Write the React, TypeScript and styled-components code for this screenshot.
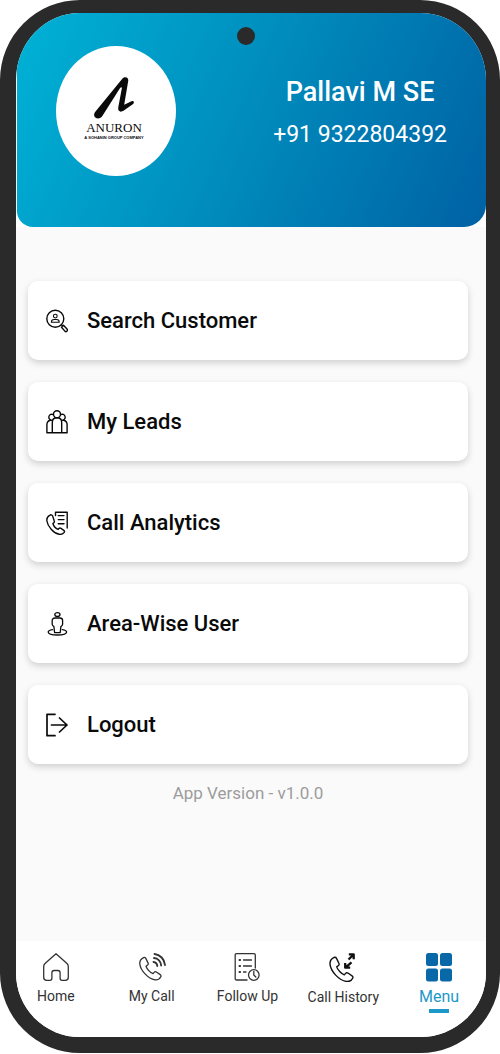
import React from "react";
import styled, { createGlobalStyle } from "styled-components";

const GlobalStyle = createGlobalStyle`
  *, *::before, *::after { box-sizing: border-box; }
  body {
    margin: 0;
    background: #ffffff;
    font-family: Roboto, "Liberation Sans", sans-serif;
  }
`;

const Phone = styled.div`
  position: relative;
  display: flex;
  flex-direction: column;
  min-height: calc(100vh - 1px);
  border: solid #2a2a2a;
  border-width: 13px 14px 16px 16px;
  border-radius: 80px;
  background: #ffffff;
  overflow: hidden;
`;

const Camera = styled.span`
  position: absolute;
  top: 14px;
  left: 49%;
  width: 18px;
  height: 18px;
  transform: translateX(-50%);
  border-radius: 50%;
  background: #2a2a2a;
`;

const Header = styled.header`
  display: flex;
  align-items: flex-start;
  justify-content: space-between;
  min-height: 214px;
  margin-left: 1px;
  padding: 33px 39px 0;
  border-radius: 0 0 22px 16px;
  background: linear-gradient(114deg, #00b2d6 0%, #008dbd 48%, #0061a4 100%);
`;

const Avatar = styled.div`
  display: flex;
  flex-direction: column;
  align-items: center;
  width: 120px;
  height: 130px;
  padding: 30px 4px 0 0;
  border-radius: 50%;
  background: #ffffff;
  color: #0a0a0a;
`;

const BrandName = styled.span`
  font: 13px/14px "Liberation Serif", serif;
`;

const BrandLine = styled.span`
  font: bold 4px/6px "Liberation Sans", sans-serif;
  white-space: nowrap;
`;

const Profile = styled.div`
  padding-top: 28px;
  color: #ffffff;
  text-align: center;
`;

const Name = styled.h1`
  margin: 0;
  font-size: 27px;
  font-weight: 500;
  line-height: 36px;
`;

const PhoneNumber = styled.p`
  margin: 8px 0 0;
  font-size: 23px;
  font-weight: 400;
  line-height: 34px;
`;

const Content = styled.main`
  flex: 1;
  padding: 54px 18px 24px 12px;
  background: #fafafa;
`;

const MenuList = styled.ul`
  display: grid;
  gap: 22px;
  margin: 0;
  padding: 0;
  list-style: none;
`;

const MenuCard = styled.button`
  display: flex;
  align-items: center;
  gap: 19px;
  width: 100%;
  height: 79px;
  padding: 0 18px;
  border: 0;
  border-radius: 10px;
  background: #ffffff;
  box-shadow: 0 3px 7px rgba(0, 0, 0, 0.17);
  color: #0a0a0a;
  font-family: inherit;
  font-size: 22px;
  font-weight: 500;
  line-height: 30px;
  text-align: left;
  cursor: pointer;
`;

const Version = styled.p`
  margin: 15px 0 0;
  color: #9c9c9c;
  font-size: 17px;
  line-height: 28px;
  text-align: center;
`;

const TabBar = styled.nav`
  display: grid;
  grid-template-columns: repeat(5, minmax(0, 1fr));
  gap: 16px;
  min-height: 96px;
  padding: 12px 7px 0 0;
  background: #ffffff;
`;

const Tab = styled.a<{ $active?: boolean }>`
  display: flex;
  flex-direction: column;
  align-items: center;
  color: ${(p) => (p.$active ? "#1c98c9" : "#333333")};
  font-size: ${(p) => (p.$active ? "16px" : "14px")};
  line-height: 30px;
  text-decoration: none;
  white-space: nowrap;

  &::after {
    content: "";
    width: 20px;
    height: 4px;
    margin-top: -3px;
    background: ${(p) => (p.$active ? "#1c98c9" : "transparent")};
  }
`;

const Svg = styled.svg`
  display: block;
  flex: none;
  fill: none;
  stroke: currentColor;
  stroke-linecap: round;
  stroke-linejoin: round;
`;

const CardSvg = styled(Svg).attrs({
  width: 22,
  height: 24,
  viewBox: "1 0 22 24",
})``;

const handset =
  "M6.6 3.6C4.6 4.6 2.4 6.4 2.8 10c.7 6.400 8.200 14.800 15.200 15.800 2.800.4 4.800-1 5.800-3 .4-.8.2-1.600-.6-2.200l-3.800-2.600c-.8-.5-1.600-.4-2.200.3l-1.200 1.400c-2.800-1-6.200-4.800-7-7.400l1.600-1.300c.7-.6.8-1.300.4-2.100L8.800 4.400c-.5-.9-1.300-1.200-2.200-.8z";

const BrandMark = () => (
  <Svg width="44" height="45" viewBox="0 0 44 45" aria-hidden="true">
    <path
      d="M3.500 35.500 30.500 2.500C32.500.2 36.500.8 36.300 4.500L32.200 28.800l7.300-3.600c2.300-.8 3.300 1.400 1.600 2.800L31.500 34.800c-3 1.800-5.700.6-5.300-3L29.800 12.500c.2-1.500-.8-1.700-1.700-.4L10.500 39.800c-1.800 3-5.200 3.500-7.200 1.700-1.800-1.700-1.500-4 .2-6z"
      fill="currentColor"
      stroke="none"
    />
  </Svg>
);

const SearchUserIcon = () => (
  <CardSvg strokeWidth="1.400">
    <circle cx="10.300" cy="9.800" r="8.500" />
    <path d="m16.400 15.700 1.400 1.400M16.500 18.200l2-2 3.700 4.100c.8 1.200-1 3-2.100 2.100z" />
    <circle cx="10.300" cy="7.100" r="1.900" strokeWidth="1.100" />
    <path d="M6.400 13.200c0-2 1.300-2.700 2.700-2.700h2.400c1.400 0 2.700.7 2.700 2.700z" strokeWidth="1.100" />
  </CardSvg>
);

const PeopleIcon = () => (
  <CardSvg strokeWidth="1.400">
    <circle cx="12" cy="4.300" r="3.500" />
    <path d="M8.300 4.600a3 3 0 1 0-1.700 5.600M15.700 4.600a3 3 0 1 1 1.700 5.600" />
    <path d="M7.300 22.800V12.500c0-3 1.800-4.700 4.700-4.700s4.700 1.700 4.700 4.700v10.300M5.500 10.300c-2.400.4-3.600 2-3.600 4.500v8h20.200v-8c0-2.500-1.200-4.100-3.600-4.500" />
  </CardSvg>
);

const CallReportIcon = () => (
  <CardSvg strokeWidth="1.400">
    <path d="M10.500 4.500V1.300h11.700v15.700M13.200 4.600h5.800M13.200 8.600h5.800M13.200 12.700h5.800" />
    <path d="M4.600 4.300C2.600 5.400 1.500 7.300 1.900 10c.7 5.600 7.100 12.500 12.300 13.300 2.200.3 4-.6 5-2 .5-.8.3-1.500-.4-2l-2.800-1.900c-.8-.5-1.500-.4-2.100.2l-.8.8c-2.200-1-4.600-3.600-5.200-5.900l.9-.8c.7-.6.8-1.200.4-2L7.600 4.900c-.6-1.200-1.800-1.400-3-.6z" />
  </CardSvg>
);

const AreaUserIcon = () => (
  <CardSvg strokeWidth="1.300">
    <ellipse cx="12.400" cy="2.600" rx="2.600" ry="1.900" />
    <path d="M9.900 6h5c1.600 0 2.700 1 2.700 2.500v3.800c0 1.200-1 1.700-1.700 2.300l-.7 6H9.600l-.7-6c-.7-.6-1.700-1.100-1.700-2.300V8.500C7.200 7 8.300 6 9.900 6z" />
    <path d="M7.500 17.600c-2.600.4-4.300 1.200-4.300 2.400 0 1.800 4.200 3 9.200 3s9.200-1.200 9.200-3c0-1.200-1.700-2-4.300-2.400" />
  </CardSvg>
);

const LogoutIcon = () => (
  <CardSvg strokeWidth="1.700">
    <path d="M10 1.300H2v21.400h8M6.500 12h15.500M14.500 5l7.500 7-7.500 7" />
  </CardSvg>
);

const HomeIcon = () => (
  <Svg width="28" height="28" viewBox="0 0 28 28" strokeWidth="1.300">
    <path d="M14 .8 3 10.500c-.9.900-1.300 1.700-1.300 3v10.700c0 2.200 1 3.100 3 3.100h3.200c1.500 0 2-.6 2-2v-5.500c0-1.600.6-2.300 2.200-2.300h3.800c1.600 0 2.200.7 2.200 2.300v5.500c0 1.400.5 2 2 2h3.200c2 0 3-.9 3-3.100V13.500c0-1.300-.4-2.100-1.300-3z" />
  </Svg>
);

const CallIcon = () => (
  <Svg width="28" height="28" viewBox="0 0 28 28" strokeWidth="1.300">
    <path d={handset} transform="translate(-1 1)" />
    <path
      d="M16.500 1c5.600.5 10 5.200 10.500 11M16 5c4 .3 6.800 3.600 7.200 7.500M15.500 9c2 .2 3.600 1.900 3.800 4"
      strokeWidth="1.900"
    />
  </Svg>
);

const FollowUpIcon = () => (
  <Svg width="28" height="28" viewBox="0 0 28 28" strokeWidth="1.300">
    <path d="M14 27H3.500c-.8 0-1.300-.5-1.300-1.300V2c0-.8.500-1.300 1.300-1.300H21c.8 0 1.300.5 1.300 1.300v13M10.500 7h8M10.500 13h8M10.500 19H13" />
    <path d="M6.500 7h.6M6.500 13h.6M6.500 19h.6" strokeWidth="2" />
    <circle cx="20.800" cy="22" r="5.300" />
    <path d="M20.800 18.500V22l2 2" />
  </Svg>
);

const CallHistoryIcon = () => (
  <Svg width="28" height="29" viewBox="0 0 28 29" strokeWidth="1.300" color="#111111">
    <path d={handset} transform="translate(-2 .6) scale(1.080)" />
    <path
      d="m19.500 6.500 4.800-4.800M19.800 1.400h4.900v4.800M22.500 9.300l-5.800 5M16.200 9.900v4.800h5"
      strokeWidth="2.300"
      strokeLinecap="butt"
    />
  </Svg>
);

const GridIcon = () => (
  <Svg width="28" height="29" viewBox="0 0 28 29">
    <g fill="#0868a8" stroke="none">
      <rect x="1" y="0" width="12" height="13" rx="2.500" />
      <rect x="15" y="0" width="12" height="13" rx="2.500" />
      <rect x="1" y="15.500" width="12" height="13" rx="2.500" />
      <rect x="15" y="15.500" width="12" height="13" rx="2.500" />
    </g>
  </Svg>
);

const menuItems = [
  { label: "Search Customer", Icon: SearchUserIcon },
  { label: "My Leads", Icon: PeopleIcon },
  { label: "Call Analytics", Icon: CallReportIcon },
  { label: "Area-Wise User", Icon: AreaUserIcon },
  { label: "Logout", Icon: LogoutIcon },
];

const tabs = [
  { label: "Home", href: "#home", Icon: HomeIcon },
  { label: "My Call", href: "#my-call", Icon: CallIcon },
  { label: "Follow Up", href: "#follow-up", Icon: FollowUpIcon },
  { label: "Call History", href: "#call-history", Icon: CallHistoryIcon },
  { label: "Menu", href: "#menu", Icon: GridIcon, active: true },
];

export default function App() {
  return (
    <>
      <GlobalStyle />
      <Phone>
        <Header>
          <Avatar>
            <BrandMark />
            <BrandName>ANURON</BrandName>
            <BrandLine>A SOHANIN GROUP COMPANY</BrandLine>
          </Avatar>
          <Profile>
            <Name>Pallavi M SE</Name>
            <PhoneNumber>+91 9322804392</PhoneNumber>
          </Profile>
        </Header>
        <Camera />
        <Content>
          <MenuList>
            {menuItems.map(({ label, Icon }) => (
              <li key={label}>
                <MenuCard type="button">
                  <Icon />
                  {label}
                </MenuCard>
              </li>
            ))}
          </MenuList>
          <Version>App Version - v1.0.0</Version>
        </Content>
        <TabBar>
          {tabs.map(({ label, href, Icon, active }) => (
            <Tab key={label} href={href} $active={active} aria-current={active ? "page" : undefined}>
              <Icon />
              {label}
            </Tab>
          ))}
        </TabBar>
      </Phone>
    </>
  );
}
